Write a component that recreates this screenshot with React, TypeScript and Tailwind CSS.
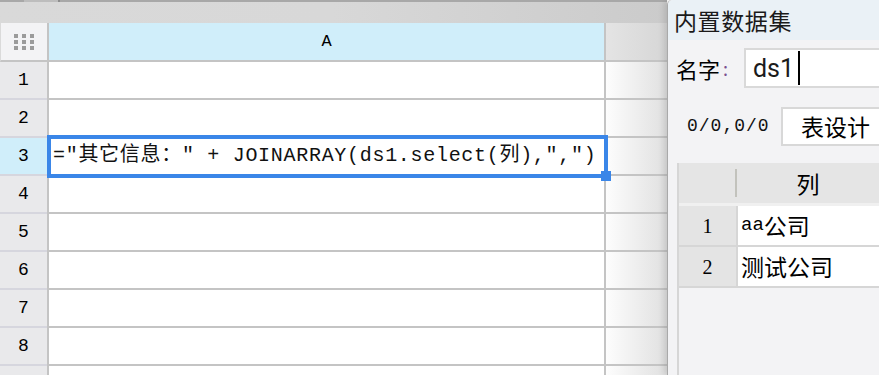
import React from "react";

const mono = { fontFamily: '"Liberation Mono", "Noto Sans CJK SC", monospace' };
const cjk = { fontFamily: '"Noto Sans CJK SC", "Liberation Sans", sans-serif' };

function GridRow({ n, selected, hideNum }: { n: number; selected?: boolean; hideNum?: boolean }) {
  return (
    <div className="flex h-[38px] shrink-0">
      <div
        className={`w-[47px] border-b-2 border-[#d6d6de] flex items-center justify-center text-[18px] text-black ${
          selected ? "bg-[#d0eefa]" : "bg-[#e9e9eb]"
        }`}
        style={mono}
      >
        {hideNum ? null : n}
      </div>
      <div className="w-[2px] bg-[#c4c4c4]" />
      <div className="w-[555px] bg-white border-b-2 border-[#c4c4c4] flex items-center">
        {selected && (
          <span
            className="pl-[4px] text-[20px] tracking-[0.7px] text-[#111] whitespace-nowrap leading-none"
            style={mono}
          >
            ="其它信息：" + JOINARRAY(ds1.select(列),",")
          </span>
        )}
      </div>
      <div className="w-[2px] bg-[#c4c4c4]" />
      <div className="flex-1 border-b-2 border-[#c4c4c4] bg-gradient-to-r from-[#fdfdfd] to-[#e0e0e0]" />
    </div>
  );
}

export default function App() {
  const rows = [1, 2, 3, 4, 5, 6, 7, 8, 9];
  return (
    <div className="relative w-[879px] h-[375px] overflow-hidden flex bg-white">
      {/* Spreadsheet */}
      <div className="w-[667px] h-[375px] overflow-hidden flex flex-col shrink-0">
        <div className="h-[2px] shrink-0 bg-[#a8a8a8] flex">
          <div className="ml-[24px] w-[36px] bg-[#bdbdbd] border-r-2 border-[#8e8e8e]" />
        </div>
        <div className="h-[21px] shrink-0 bg-gradient-to-r from-[#d9d9d9] via-[#d8d8d8] to-[#cbcbcb]" />
        <div className="flex h-[39px] shrink-0">
          <div className="w-[47px] bg-[#f3f3f5] border-b-2 border-[#c4c4c4] border-l border-l-[#dadada] flex items-center justify-center">
            <div className="grid grid-cols-3 gap-x-[4px] gap-y-[2px]">
              {Array.from({ length: 9 }).map((_, i) => (
                <div key={i} className="w-[4px] h-[4px] bg-[#9b9b9b]" />
              ))}
            </div>
          </div>
          <div className="w-[2px] bg-[#c4c4c4]" />
          <div
            className="w-[555px] bg-[#d0eefa] border-b-2 border-[#c4c4c4] flex items-center justify-center text-[17px] text-black"
            style={mono}
          >
            A
          </div>
          <div className="w-[2px] bg-[#c4c4c4]" />
          <div className="flex-1 border-b-2 border-[#c4c4c4] bg-gradient-to-r from-[#e4e4e4] to-[#d6d6d6]" />
        </div>
        {rows.map((n) => (
          <GridRow key={n} n={n} selected={n === 3} hideNum={n === 9} />
        ))}
      </div>

      {/* Selection overlay */}
      <div className="absolute left-[47px] top-[135px] w-[561px] h-[43px] border-4 border-[#3a86e8] pointer-events-none" />
      <div className="absolute left-[601px] top-[171px] w-[10px] h-[10px] bg-[#3a86e8]" />

      {/* Dataset panel */}
      <div className="w-[212px] flex flex-col bg-[#f3f3f5] border-l border-[#a9a9a9] rounded-tl-[5px] shadow-[-3px_0_6px_rgba(0,0,0,0.12)] z-10">
        <div
          className="h-[40px] shrink-0 bg-[#eaf1f6] rounded-tl-[5px] flex items-center pl-[6px] text-[23px] text-[#1a1a1a] tracking-[0.6px]"
          style={cjk}
        >
          内置数据集
        </div>
        <div className="mt-[8px] shrink-0 flex items-center h-[40px]">
          <div className="pl-[8px] w-[76px] flex items-center text-[22px] text-black" style={cjk}>
            名字<span className="text-[#7a4f8f] text-[18px] ml-[3px]">:</span>
          </div>
          <div className="flex-1 h-[40px] bg-white border-2 border-r-0 border-[#d9d9d9] flex items-center pl-[7px]">
            <span
              className="text-[25px] text-[#1b1b1b] leading-none"
              style={{ fontFamily: "Roboto, 'Liberation Sans', sans-serif" }}
            >
              ds1
            </span>
            <div className="ml-[4px] w-[2px] h-[34px] bg-black" />
          </div>
        </div>
        <div className="mt-[19px] shrink-0 flex items-center h-[39px]">
          <div
            className="pl-[19px] w-[113px] text-[18px] tracking-[1px] text-[#111]"
            style={mono}
          >
            0/0,0/0
          </div>
          <div
            className="flex-1 h-[39px] bg-white border-2 border-r-0 border-[#d8d8d8] flex items-center pl-[18px] text-[23px] text-black"
            style={cjk}
          >
            表设计
          </div>
        </div>
        <div className="mt-[17px] ml-[9px] flex-1 flex flex-col border-l-2 border-[#d6d6d6]">
          <div className="h-[43px] shrink-0 bg-[#e5e5e5] border-b-[3px] border-[#f0f0f0] flex items-center">
            <div className="w-[58px] h-full flex items-center justify-end">
              <div className="w-[2px] h-[28px] bg-[#c2c2bc]" />
            </div>
            <div className="flex-1 flex justify-center text-[23px] text-black" style={cjk}>
              列
            </div>
          </div>
          {[
            { n: 1, t: (<><span className="text-[19px]" style={mono}>aa</span>公司</>) },
            { n: 2, t: <>测试公司</> },
          ].map((r) => (
            <div key={r.n} className="flex h-[41px] shrink-0 border-b-2 border-[#d6d6d6]">
              <div
                className="w-[59px] bg-[#e4e4e4] border-r-2 border-[#d6d6d6] flex items-center justify-center text-[20px] text-black"
                style={{ fontFamily: '"Liberation Serif", serif' }}
              >
                {r.n}
              </div>
              <div
                className="flex-1 bg-white flex items-center pl-[3px] text-[23px] text-black whitespace-nowrap"
                style={cjk}
              >
                {r.t}
              </div>
            </div>
          ))}
        </div>
      </div>
    </div>
  );
}
